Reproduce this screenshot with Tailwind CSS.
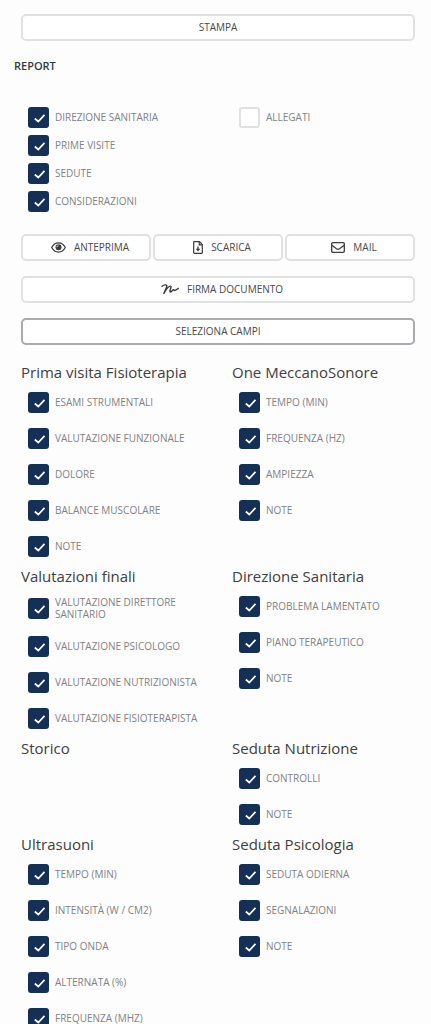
<!DOCTYPE html>
<html lang="it">

<head>
    <meta charset="UTF-8">
    <meta name="viewport" content="width=device-width, initial-scale=1.0">
    <title>Report</title>
    <script src="https://cdn.jsdelivr.net/npm/@tailwindcss/browser@4"></script>
</head>

<body class="bg-[#fdfdfd] font-['Open_Sans',sans-serif] text-[10px] text-[#484848] overflow-x-hidden">
    <main class="pl-[21px] pt-[14px]">
        <div class="pr-4">
            <button type="button" class="flex w-full h-[27px] items-center justify-center rounded-[5px] border-2 border-[#dfe1e2] bg-white">STAMPA</button>
        </div>

        <h1 class="-ml-[7px] mt-4 text-[11px] leading-[18px] font-semibold text-[#2f3a48]">REPORT</h1>

        <div class="mt-7 grid grid-cols-2 gap-x-3" id="report"></div>

        <div class="mt-[19px] pr-4 space-y-[15px]">
            <div class="grid grid-cols-3 gap-[2px]">
                <button type="button" class="flex h-[27px] items-center justify-center gap-2 rounded-[5px] border-2 border-[#dfe1e2] bg-white pl-2">
                    <svg class="w-[15px] h-[11px]" viewBox="0 0 15 11" fill="none" stroke="#3c3c3c" stroke-width="1.2">
                        <path d="M.7 5.5C2.3 2.5 4.7.9 7.5.9s5.200 1.600 6.800 4.600c-1.600 3-4 4.600-6.800 4.600S2.300 8.500.7 5.500z" />
                        <circle cx="7.500" cy="5.300" r="3" fill="#3c3c3c" stroke="none" />
                        <path d="M5.900 5.200c0-.9.7-1.600 1.600-1.600" stroke="#fff" stroke-width=".8" />
                    </svg>
                    ANTEPRIMA
                </button>
                <button type="button" class="flex h-[27px] items-center justify-center gap-2 rounded-[5px] border-2 border-[#dfe1e2] bg-white pl-2">
                    <svg class="w-[10px] h-[13px]" viewBox="0 0 10 13" fill="none" stroke="#3c3c3c" stroke-width="1.2">
                        <path d="M1.200.7h5.300l2.800 2.900v8.200q0 .5-.5.5H1.200q-.5 0-.5-.5V1.200q0-.5.5-.5z" />
                        <path d="M6.200.8v3h3" />
                        <path d="M5 5.500v3.500" stroke-width="1.400" />
                        <path d="M2.700 7.800h4.600L5 10.500z" fill="#3c3c3c" stroke="none" />
                    </svg>
                    SCARICA
                </button>
                <button type="button" class="flex h-[27px] items-center justify-center gap-2 rounded-[5px] border-2 border-[#dfe1e2] bg-white pl-2">
                    <svg class="w-[14px] h-[11px]" viewBox="0 0 14 11" fill="none" stroke="#3c3c3c" stroke-width="1.300">
                        <rect x=".7" y=".7" width="12.600" height="9.600" rx="1.100" />
                        <path d="M.8 3.200l4.700 3.600q1.500 1 3 0l4.700-3.600" />
                    </svg>
                    MAIL
                </button>
            </div>
            <button type="button" class="flex w-full h-[27px] items-center justify-center gap-2 rounded-[5px] border-2 border-[#dfe1e2] bg-white pl-2">
                <svg class="w-[18px] h-[11px]" viewBox="0 0 18 11" fill="none" stroke="#3c3c3c" stroke-width="1.400" stroke-linecap="round" stroke-linejoin="round">
                    <path d="M1 2.200C2.800.8 6 .2 5.800 2.100 5.600 4.300 3.700 7 2.900 9.500 4.800 6 7.800 1.800 9.600 2.100c1.600.3-1.900 5.500-.3 6 1.200.3 2.400-2.700 3.400-2.500.6.2.1 1 1 1 1.200-.1 2.200-1.400 3.600-2.300" />
                </svg>
                FIRMA DOCUMENTO
            </button>
            <button type="button" class="flex w-full h-[27px] items-center justify-center rounded-[5px] border-2 border-[#a9abaf] bg-white">SELEZIONA CAMPI</button>
        </div>

        <div class="mt-[15px] grid grid-cols-2 gap-x-3" id="campi"></div>
    </main>

    <template id="checkRow">
        <label class="flex items-center gap-[6px] pl-[7px] leading-3 text-[#808285]">
            <span class="relative size-[21px] shrink-0">
                <input type="checkbox" class="peer block size-[21px] appearance-none rounded-[3px] border-2 border-[#dfe1e2] bg-white checked:border-[#143057] checked:bg-[#143057]">
                <svg class="pointer-events-none absolute inset-0 hidden peer-checked:block" viewBox="0 0 21 21" fill="none" stroke="#fff" stroke-width="1.700">
                    <path d="M6.800 11.500l3.500 3 6.200-6.600" />
                </svg>
            </span>
            <span class="text py-2"></span>
        </label>
    </template>

    <script>
        const report = [
            ['Direzione sanitaria', 'Prime visite', 'Sedute', 'Considerazioni'],
            ['Allegati'],
        ];

        const campi = [
            ['Prima visita Fisioterapia', ['Esami strumentali', 'Valutazione funzionale', 'Dolore', 'Balance muscolare', 'Note']],
            ['One MeccanoSonore', ['Tempo (min)', 'Frequenza (Hz)', 'Ampiezza', 'Note']],
            ['Valutazioni finali', ['Valutazione direttore sanitario', 'Valutazione psicologo', 'Valutazione nutrizionista', 'Valutazione fisioterapista']],
            ['Direzione Sanitaria', ['Problema lamentato', 'Piano terapeutico', 'Note']],
            ['Storico', []],
            ['Seduta Nutrizione', ['Controlli', 'Note']],
            ['Ultrasuoni', ['Tempo (min)', 'Intensità (W / cm2)', 'Tipo onda', 'Alternata (%)', 'Frequenza (MHz)']],
            ['Seduta Psicologia', ['Seduta odierna', 'Segnalazioni', 'Note']],
        ];

        function checkRow(text, checked, classes) {
            const row = document.getElementById('checkRow').content.firstElementChild.cloneNode(true);
            row.className += ' ' + classes;
            row.querySelector('input').checked = checked;
            row.querySelector('.text').textContent = text.toUpperCase();
            return row;
        }

        report.forEach((items) => {
            const col = document.createElement('div');
            items.forEach((text) => col.append(checkRow(text, text !== 'Allegati', 'h-7')));
            document.getElementById('report').append(col);
        });

        campi.forEach(([title, items]) => {
            const section = document.createElement('section');
            const heading = document.createElement('h2');
            heading.className = 'text-[15px] leading-6 text-[#404040]';
            heading.textContent = title;
            section.append(heading);
            items.forEach((text) => section.append(checkRow(text, true, 'min-h-9 pr-3')));
            document.getElementById('campi').append(section);
        });
    </script>
</body>

</html>
